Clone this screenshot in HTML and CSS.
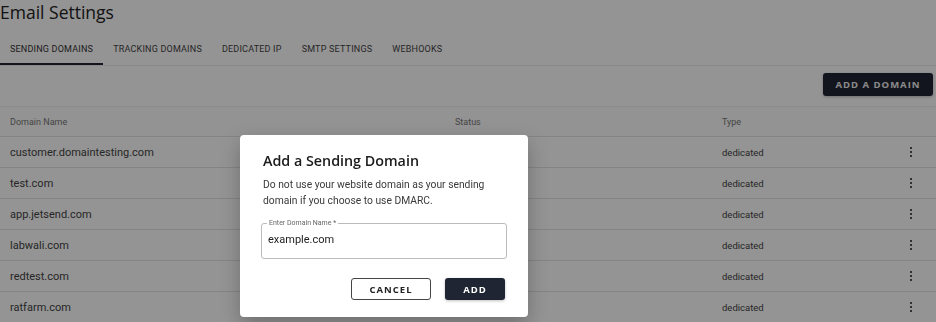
FILE: index.html
```html
<!DOCTYPE html>
<html lang="en">
<head>
  <meta charset="UTF-8" />
  <meta name="viewport" content="width=device-width, initial-scale=1.0" />
  <title>Email Settings</title>
  <link rel="stylesheet" href="styles.css">
</head>
<body>
  <div class="page">
    <h1 class="title">Email Settings</h1>

    <nav class="tabs">
      <a class="tab active">Sending Domains</a>
      <a class="tab">Tracking Domains</a>
      <a class="tab">Dedicated IP</a>
      <a class="tab">SMTP Settings</a>
      <a class="tab">Webhooks</a>
    </nav>

    <div class="toolbar">
      <button class="btn btn-dark btn-add-domain">Add a Domain</button>
    </div>

    <div class="table">
      <div class="row head">
        <div class="cell">Domain Name</div>
        <div class="cell">Status</div>
        <div class="cell">Type</div>
        <div class="cell"></div>
      </div>
      <div class="row">
        <div class="cell">customer.domaintesting.com</div>
        <div class="cell"></div>
        <div class="cell type">dedicated</div>
        <div class="cell menu"><span class="kebab"><i></i><i></i><i></i></span></div>
      </div>
      <div class="row">
        <div class="cell">test.com</div>
        <div class="cell"></div>
        <div class="cell type">dedicated</div>
        <div class="cell menu"><span class="kebab"><i></i><i></i><i></i></span></div>
      </div>
      <div class="row">
        <div class="cell">app.jetsend.com</div>
        <div class="cell"></div>
        <div class="cell type">dedicated</div>
        <div class="cell menu"><span class="kebab"><i></i><i></i><i></i></span></div>
      </div>
      <div class="row">
        <div class="cell">labwali.com</div>
        <div class="cell"></div>
        <div class="cell type">dedicated</div>
        <div class="cell menu"><span class="kebab"><i></i><i></i><i></i></span></div>
      </div>
      <div class="row">
        <div class="cell">redtest.com</div>
        <div class="cell"></div>
        <div class="cell type">dedicated</div>
        <div class="cell menu"><span class="kebab"><i></i><i></i><i></i></span></div>
      </div>
      <div class="row">
        <div class="cell">ratfarm.com</div>
        <div class="cell"></div>
        <div class="cell type">dedicated</div>
        <div class="cell menu"><span class="kebab"><i></i><i></i><i></i></span></div>
      </div>
    </div>
  </div>

  <div class="backdrop"></div>

  <div class="dialog" role="dialog">
    <h2 class="dialog-title">Add a Sending Domain</h2>
    <p class="dialog-text">Do not use your website domain as your sending domain if you choose to use DMARC.</p>
    <fieldset class="field">
      <legend>Enter Domain Name *</legend>
      <input type="text" value="example.com" />
    </fieldset>
    <div class="dialog-actions">
      <button class="btn btn-outline">Cancel</button>
      <button class="btn btn-dark btn-ok">Add</button>
    </div>
  </div>
</body>
</html>
```

FILE: styles.css
```css
body { margin: 0; font-family: Roboto, "Liberation Sans", sans-serif; background: #fff; color: #212121; overflow: hidden; }
.page { width: 936px; }

.title { margin: 0; padding-top: 1px; font-family: "Open Sans", sans-serif; font-weight: 400; font-size: 17.5px; line-height: 22px; color: #222; }

.tabs { display: flex; margin-top: 10px; border-bottom: 1px solid #ececec; height: 32px; }
.tab { display: flex; align-items: center; padding: 0 10px; font-size: 9px; letter-spacing: 0.2px; text-transform: uppercase; color: #444; border-bottom: 2px solid transparent; box-sizing: border-box; height: 32px; padding-top: 2px; }
.tab.active { border-bottom-color: #1f2533; color: #333; }

.toolbar { display: flex; justify-content: flex-end; padding: 7px 3px 0 0; height: 33px; border-bottom: 1px solid #f0f0f0; box-sizing: content-box; }

.btn { font-family: "Open Sans", sans-serif; font-weight: 700; font-size: 9.5px; letter-spacing: 1px; text-transform: uppercase; border-radius: 3px; cursor: pointer; }
.btn-dark { background: #1f2533; color: #fff; border: none; box-shadow: 0 1px 3px rgba(0,0,0,0.25); }
.btn-add-domain { height: 23px; width: 110px; padding: 0; color: #eee; }

.table { font-size: 11px; }
.row { display: grid; grid-template-columns: 445px 267px 1fr 50px; height: 30px; border-bottom: 1px solid #e4e4e4; align-items: center; }
.row.head { height: 29px; font-size: 9px; background: #fdfdfd; }
.cell { padding-left: 10px; white-space: nowrap; color: #444; }
.row.head .cell { color: #777; }
.cell.type { font-size: 9.5px; }
.cell.menu { padding: 0; display: flex; justify-content: center; padding-right: 1px; }
.kebab { display: flex; flex-direction: column; gap: 2px; }
.kebab i { display: block; width: 2px; height: 2px; background: #555; }

.backdrop { position: fixed; inset: 0; background: rgba(0,0,0,0.42); }

.dialog { position: fixed; left: 240px; top: 135px; width: 288px; height: 182px; box-sizing: border-box; background: #fff; border-radius: 4px; padding: 16px 21px 0; box-shadow: 0 8px 20px rgba(0,0,0,0.25); }
.dialog-title { margin: 0 0 0 2px; font-family: "Open Sans", sans-serif; font-weight: 600; font-size: 14.3px; line-height: 20px; color: #1b1b1b; }
.dialog-text { margin: 6px 0 0 2px; font-size: 10.3px; line-height: 15.5px; color: #3a3a3a; }
.field { margin: 11px 0 0; padding: 0 6px 0 6px; height: 40px; box-sizing: border-box; border: 1px solid #bbb; border-radius: 3px; }
.field legend { font-size: 7px; color: #666; padding: 0 2px; line-height: 8px; margin-left: -1px; }
.field input { border: none; outline: none; padding: 0; margin-top: 6px; font-family: Roboto, sans-serif; font-size: 11px; color: #222; width: 100%; }
.dialog-actions { display: flex; justify-content: flex-end; gap: 14px; margin-top: 19px; padding-right: 2px; }
.btn-outline { width: 80px; height: 22px; background: #fff; border: 1px solid #444; color: #222; padding: 0; }
.btn-ok { width: 60px; height: 22px; padding: 0; }
```
